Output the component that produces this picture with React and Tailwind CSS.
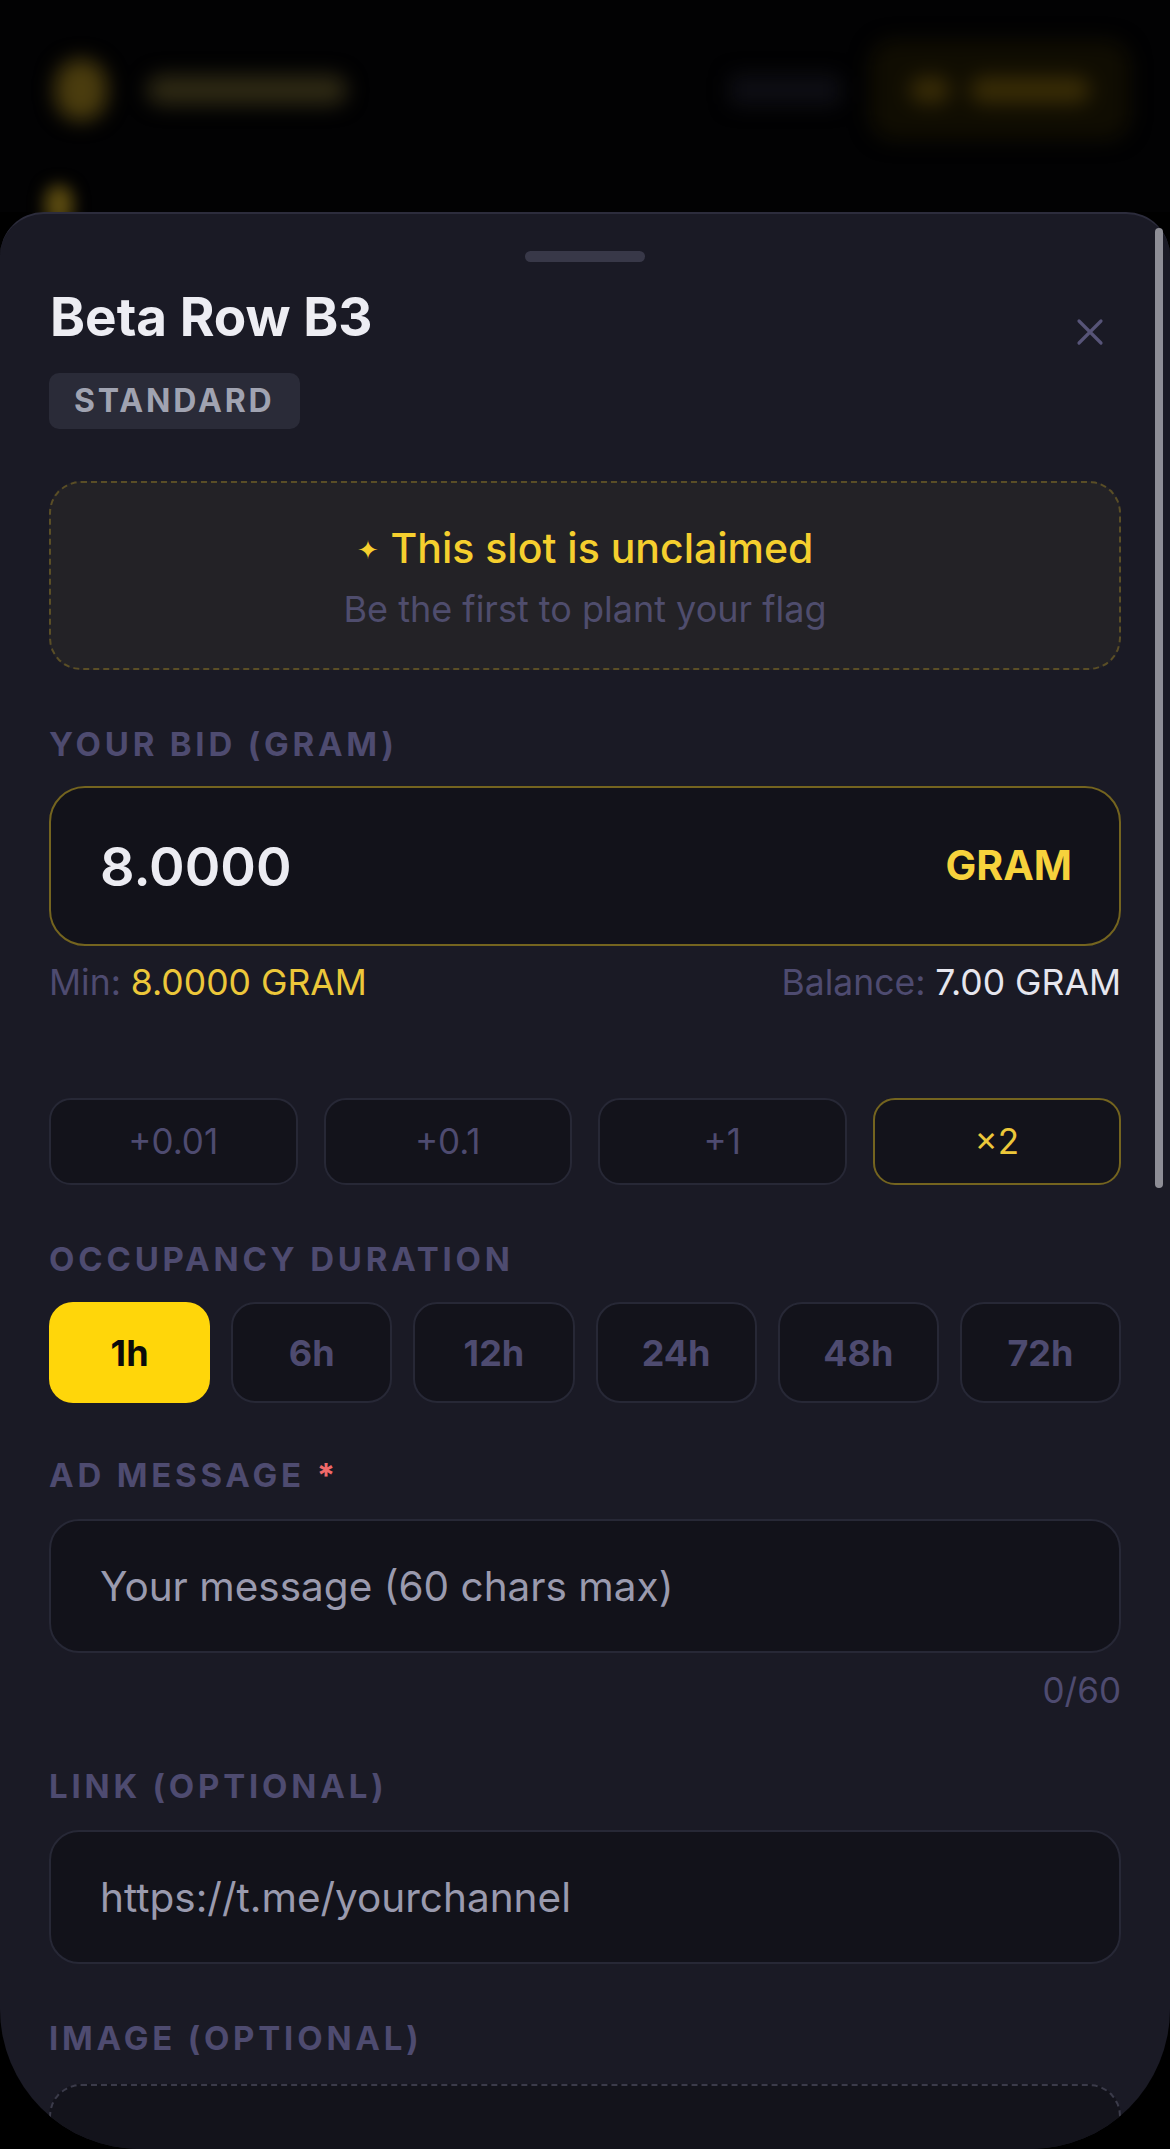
import {useState} from "react";

const quickSteps = ["+0.01", "+0.1", "+1", "×2"];
const durations = ["1h", "6h", "12h", "24h", "48h", "72h"];

function Label({children, required}) {
    return (
        <div className="text-[33px] leading-[38px] font-bold tracking-[0.115em] text-[#4e4b70] uppercase">
            {children}
            {required && <span className="text-[#f06a6a] ml-[12px]">*</span>}
        </div>
    )
}

function CloseIcon() {
    return (
        <svg width="28" height="28" viewBox="0 0 28 28" fill="none">
            <path d="M3 3L25 25M25 3L3 25" stroke="#575478" strokeWidth="3.2" strokeLinecap="round"/>
        </svg>
    )
}

export default function App() {
    const [duration, setDuration] = useState("1h")
    const [message, setMessage] = useState("")

    return (
        <div className="bg-black h-[2149px] w-[1170px] font-[Inter,sans-serif]">
            <div className="relative h-full rounded-b-[140px] overflow-hidden flex flex-col">
                {/* page behind the sheet, blurred */}
                <div className="h-[212px] shrink-0 bg-[#020203] relative">
                    <div className="flex items-center justify-between pl-[55px] pr-[40px] pt-[40px] blur-[10px]">
                        <div className="flex items-center gap-[40px]">
                            <div className="w-[52px] h-[62px] rounded-full bg-[#4a3c0e]"></div>
                            <div className="w-[200px] h-[30px] rounded-full bg-[#2e2914]"></div>
                        </div>
                        <div className="flex items-center gap-[30px]">
                            <div className="w-[110px] h-[30px] rounded-md bg-[#0e0e14]"></div>
                            <div className="w-[260px] h-[100px] rounded-[24px] bg-[#100d02] flex items-center justify-center gap-[20px]">
                                <div className="w-[40px] h-[26px] rounded-full bg-[#3a2d06]"></div>
                                <div className="w-[120px] h-[26px] rounded-full bg-[#3a2d06]"></div>
                            </div>
                        </div>
                    </div>
                    <div className="absolute left-[45px] top-[185px] w-[28px] h-[40px] rounded-full bg-[#5a4a10] blur-[8px]"></div>
                </div>

                {/* sheet */}
                <div className="relative flex-1 bg-[#1a1a25] rounded-t-[44px] border-t-2 border-[#2c2c3c] px-[49px] pt-[37px]">
                    <div className="absolute right-[7px] top-[14px] w-[8px] h-[960px] rounded-full bg-[#8e8e96]"></div>

                    <div className="mx-auto w-[120px] h-[11px] rounded-full bg-[#383848]"></div>

                    <div className="flex justify-between items-start mt-[25px]">
                        <div>
                            <h1 className="text-[53px] leading-[60px] font-bold text-[#ededf3] pl-[1px]">Beta Row B3</h1>
                            <div className="mt-[26px] inline-flex items-center h-[56px] px-[25px] rounded-[10px] bg-[#2a2b38] text-[32px] font-bold tracking-[0.09em] text-[#a0a3b1]">
                                STANDARD
                            </div>
                        </div>
                        <button className="w-[44px] h-[44px] flex items-center justify-center mt-[23px] mr-[9px]">
                            <CloseIcon/>
                        </button>
                    </div>

                    <div className="mt-[52px] h-[189px] rounded-[32px] border-2 border-dashed border-[#5a4e26] bg-[#232226] flex flex-col items-center pt-[39px]">
                        <div className="text-[41px] leading-[48px] font-medium text-[#f5cf2e] flex items-center">
                            <span className="text-[26px] mr-[12px] mt-[4px]">✦</span>
                            This slot is unclaimed
                        </div>
                        <div className="mt-[13px] text-[36px] leading-[44px] text-[#4f4d6d]">Be the first to plant your flag</div>
                    </div>

                    <div className="mt-[55px]">
                        <Label>Your bid (GRAM)</Label>
                    </div>
                    <div className="mt-[23px] h-[160px] rounded-[36px] border-2 border-[#74641f] bg-[#12121a] flex items-center justify-between pl-[49px] pr-[47px]">
                        <span className="text-[54px] font-semibold text-[#ececf2]">8.0000</span>
                        <span className="text-[41px] font-bold text-[#f7d23c]">GRAM</span>
                    </div>
                    <div className="mt-[17px] flex justify-between text-[35.5px] leading-[40px]">
                        <div><span className="text-[#4e4b70]">Min: </span><span className="text-[#ecc73a]">8.0000 GRAM</span></div>
                        <div><span className="text-[#4e4b70]">Balance: </span><span className="text-[#e6e6ee]">7.00 GRAM</span></div>
                    </div>

                    <div className="mt-[95px] grid grid-cols-4 gap-[26px]">
                        {quickSteps.map((step) => {
                            const isDouble = step === "×2";
                            return (
                                <button
                                    key={step}
                                    className={`h-[87px] rounded-[22px] border-2 bg-[#13131b] text-[35px] ${isDouble ? 'border-[#74641f] text-[#ecc73a]' : 'border-[#272836] text-[#4e4b70]'}`}
                                >
                                    {step}
                                </button>
                            )
                        })}
                    </div>

                    <div className="mt-[55px]">
                        <Label>Occupancy duration</Label>
                    </div>
                    <div className="mt-[24px] grid grid-cols-6 gap-[21px]">
                        {durations.map((d) => {
                            const active = d === duration;
                            return (
                                <button
                                    key={d}
                                    onClick={() => setDuration(d)}
                                    className={`h-[101px] rounded-[24px] text-[36px] font-bold ${active ? 'bg-[#ffd60a] text-[#0b0b0b]' : 'border-2 border-[#272836] bg-[#13131b] text-[#4e4b70]'}`}
                                >
                                    {d}
                                </button>
                            )
                        })}
                    </div>

                    <div className="mt-[53px]">
                        <Label required>Ad message</Label>
                    </div>
                    <input
                        value={message}
                        onChange={(e) => setMessage(e.target.value.slice(0, 60))}
                        placeholder="Your message (60 chars max)"
                        className="mt-[25px] w-full h-[134px] rounded-[30px] border-2 border-[#272836] bg-[#12121a] pl-[49px] text-[40.5px] text-[#e6e6ee] placeholder:text-[#9a9aae] outline-none"
                    />
                    <div className="mt-[17px] text-right text-[35px] leading-[40px] text-[#4e4b70]">{message.length}/60</div>

                    <div className="mt-[57px]">
                        <Label>Link (optional)</Label>
                    </div>
                    <input
                        placeholder="https://t.me/yourchannel"
                        className="mt-[25px] w-full h-[134px] rounded-[30px] border-2 border-[#272836] bg-[#12121a] pl-[49px] text-[40.5px] text-[#e6e6ee] placeholder:text-[#9a9aae] outline-none"
                    />

                    <div className="mt-[55px]">
                        <Label>Image (optional)</Label>
                    </div>
                    <div className="mt-[27px] h-[220px] rounded-[32px] border-2 border-dashed border-[#3b3b4a] bg-[#13131b]"></div>
                </div>
            </div>
        </div>
    )
}
